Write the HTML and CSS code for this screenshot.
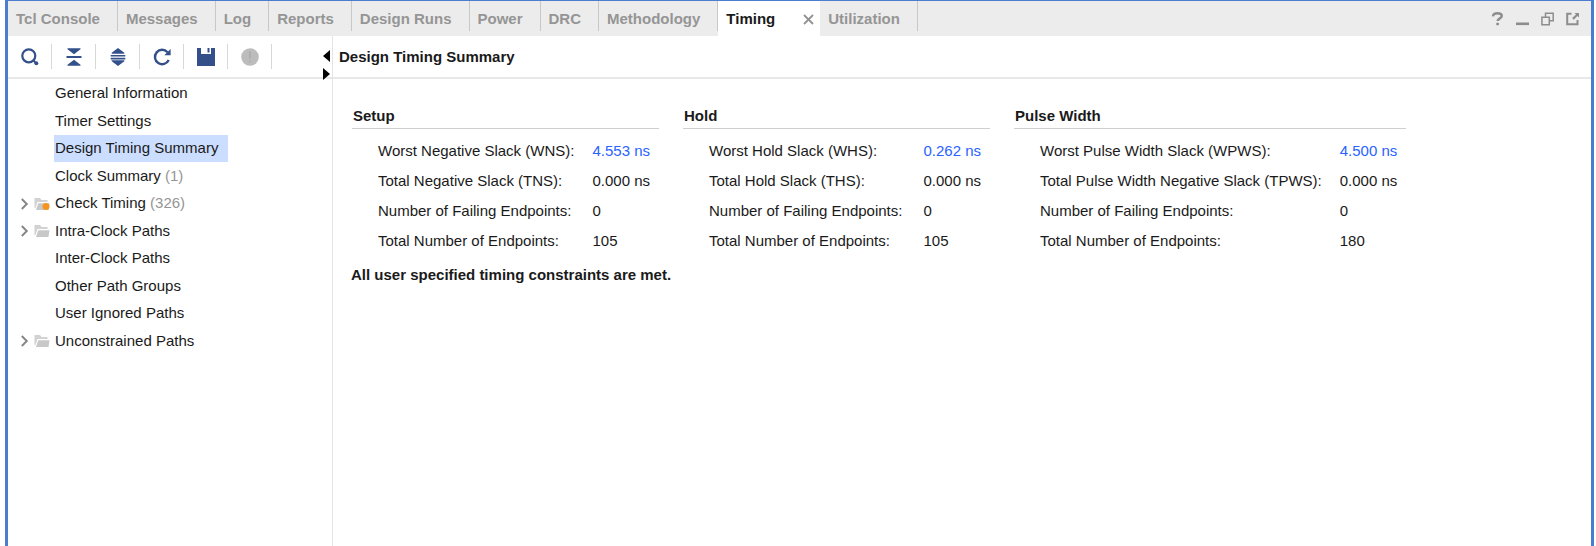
FILE: index.html
```html
<!DOCTYPE html>
<html lang="en">
<head>
<meta charset="utf-8">
<title>Timing</title>
<link rel="stylesheet" href="styles.css">
</head>
<body>
<div class="window">
  <header class="tabbar">
    <nav class="tabs" aria-label="Result windows">
      <div class="tab"><button type="button">Tcl Console</button></div>
      <div class="tab"><button type="button">Messages</button></div>
      <div class="tab"><button type="button">Log</button></div>
      <div class="tab"><button type="button">Reports</button></div>
      <div class="tab"><button type="button">Design Runs</button></div>
      <div class="tab"><button type="button">Power</button></div>
      <div class="tab"><button type="button">DRC</button></div>
      <div class="tab"><button type="button">Methodology</button></div>
      <div class="tab active"><button type="button" aria-current="page">Timing</button><button type="button" class="close" aria-label="Close Timing"><svg width="11" height="11" viewBox="0 0 11 11"><path d="M1 1l9 9M10 1l-9 9" fill="none" stroke="#929292" stroke-width="1.8"/></svg></button></div>
      <div class="tab"><button type="button">Utilization</button></div>
    </nav>
    <div class="controls">
      <button type="button" aria-label="Help"><svg width="13" height="14" viewBox="0 0 13 14"><path d="M2 4.3C2.2 2.4 3.9 1.3 6.4 1.3s4.4 1 4.4 2.8c0 2.3-4.2 2.3-4.2 5" fill="none" stroke="#8d8d8d" stroke-width="2.4"/><path d="M5.3 10.8h2.6v2.4H5.3z" fill="#8d8d8d"/></svg></button>
      <button type="button" aria-label="Minimize"><svg width="13" height="14" viewBox="0 0 13 14"><path d="M0 10.5h13v2.6H0z" fill="#8d8d8d"/></svg></button>
      <button type="button" aria-label="Restore"><svg width="13" height="14" viewBox="0 0 13 14"><path d="M4.5 5V1.2h7.7v7.6H8.5M.9 5.3h7.4v7.4H.9z" fill="none" stroke="#8d8d8d" stroke-width="1.5"/></svg></button>
      <button type="button" aria-label="Float"><svg width="13" height="14" viewBox="0 0 13 14"><path d="M5.5 1.7H1.2v10.6h10.3V8" fill="none" stroke="#8d8d8d" stroke-width="2"/><path d="M8.5 1H13v4.5l-1.600-1.500-3.600 3.800-1.700-1.700L10 2.500z" fill="#8d8d8d"/></svg></button>
    </div>
  </header>
  <div class="body">
    <aside class="side">
      <div class="toolbar">
        <button type="button" aria-label="Search"><svg width="20" height="20" viewBox="0 0 20 20"><circle cx="8.800" cy="8.800" r="6.500" fill="none" stroke="#34508a" stroke-width="2.200"/><path d="M13.200 13.200l2 2" stroke="#34508a" stroke-width="2"/><circle cx="16.300" cy="16.300" r="2" fill="#34508a"/></svg></button>
        <button type="button" aria-label="Collapse all"><svg width="20" height="20" viewBox="0 0 20 20"><path d="M3.500 1.200h13v1L10 7.200 3.500 2.200zM3.500 18.800h13v-1L10 12.800l-6.500 5zM2.500 9h15v1.900h-15z" fill="#34508a"/></svg></button>
        <button type="button" aria-label="Expand all"><svg width="20" height="20" viewBox="0 0 20 20"><path d="M10 1l6.300 4.700v1.100H3.700V5.700zM10 19l6.300-4.700v-1.100H3.700v1.100zM2.700 7.900h14.600v1.700H2.700zM2.700 10.700h14.600v1.700H2.700z" fill="#34508a"/></svg></button>
        <button type="button" aria-label="Refresh"><svg width="20" height="20" viewBox="0 0 20 20"><path d="M15.500 5.200A7.200 7.200 0 1 0 16.700 13" fill="none" stroke="#34508a" stroke-width="2.400"/><path d="M18.600 2v6.300h-6.300z" fill="#34508a"/></svg></button>
        <button type="button" aria-label="Save"><svg width="20" height="20" viewBox="0 0 20 20"><path d="M1 1h4v6h10V1h4v18H1z" fill="#34508a"/><path d="M11.500 1h2v4.500h-2z" fill="#34508a"/></svg></button>
        <button type="button" aria-label="Report issues" disabled><svg width="20" height="20" viewBox="0 0 20 20"><circle cx="10" cy="10" r="8.800" fill="#bcbcbc"/><path d="M9.200 4.500h1.600v7H9.200zM9.200 13.500h1.600v1.800H9.200z" fill="#aaa"/></svg></button>
      </div>
      <ul class="tree">
        <li><span class="twist"></span><a href="#general">General Information</a></li>
        <li><span class="twist"></span><a href="#settings">Timer Settings</a></li>
        <li><span class="twist"></span><a href="#summary" class="selected">Design Timing Summary</a></li>
        <li><span class="twist"></span><a href="#clocks">Clock Summary <span class="count">(1)</span></a></li>
        <li><button type="button" class="twist" aria-label="Expand Check Timing"><svg width="32" height="14" viewBox="0 0 32 14"><path d="M1.800 2l5 5-5 5" fill="none" stroke="#858585" stroke-width="1.900"/><path d="M14.500 1h5.500l1.500 2h6v2h-10l-2 6h-1z" fill="#d2d2d2"/><path d="M18.300 6.200H29.500l-1 6.800H16z" fill="#c8c8c8"/><circle cx="26" cy="9.400" r="3.500" fill="#f7941d"/></svg></button><a href="#check">Check Timing <span class="count">(326)</span></a></li>
        <li><button type="button" class="twist" aria-label="Expand Intra-Clock Paths"><svg width="32" height="14" viewBox="0 0 32 14"><path d="M1.800 2l5 5-5 5" fill="none" stroke="#858585" stroke-width="1.900"/><path d="M14.500 1h5.500l1.500 2h6v2h-10l-2 6h-1z" fill="#d2d2d2"/><path d="M18.300 6.200H29.500l-1 6.800H16z" fill="#c8c8c8"/></svg></button><a href="#intra">Intra-Clock Paths</a></li>
        <li><span class="twist"></span><a href="#inter">Inter-Clock Paths</a></li>
        <li><span class="twist"></span><a href="#other">Other Path Groups</a></li>
        <li><span class="twist"></span><a href="#ignored">User Ignored Paths</a></li>
        <li><button type="button" class="twist" aria-label="Expand Unconstrained Paths"><svg width="32" height="14" viewBox="0 0 32 14"><path d="M1.800 2l5 5-5 5" fill="none" stroke="#858585" stroke-width="1.900"/><path d="M14.500 1h5.500l1.500 2h6v2h-10l-2 6h-1z" fill="#d2d2d2"/><path d="M18.300 6.200H29.500l-1 6.800H16z" fill="#c8c8c8"/></svg></button><a href="#unconstrained">Unconstrained Paths</a></li>
      </ul>
      <div class="splitter">
        <button type="button" aria-label="Collapse side panel"><svg width="7" height="12" viewBox="0 0 7 12"><path d="M7 0v12L0 6z"/></svg></button>
        <button type="button" aria-label="Expand side panel"><svg width="7" height="12" viewBox="0 0 7 12"><path d="M0 0v12l7-6z"/></svg></button>
      </div>
    </aside>
    <main class="main" id="summary">
      <h1 class="title">Design Timing Summary</h1>
      <div class="groups">
        <section class="group">
          <h2>Setup</h2>
          <table>
            <tr><th scope="row">Worst Negative Slack (WNS):</th><td><a href="#wns">4.553 ns</a></td></tr>
            <tr><th scope="row">Total Negative Slack (TNS):</th><td>0.000 ns</td></tr>
            <tr><th scope="row">Number of Failing Endpoints:</th><td>0</td></tr>
            <tr><th scope="row">Total Number of Endpoints:</th><td>105</td></tr>
          </table>
        </section>
        <section class="group">
          <h2>Hold</h2>
          <table>
            <tr><th scope="row">Worst Hold Slack (WHS):</th><td><a href="#whs">0.262 ns</a></td></tr>
            <tr><th scope="row">Total Hold Slack (THS):</th><td>0.000 ns</td></tr>
            <tr><th scope="row">Number of Failing Endpoints:</th><td>0</td></tr>
            <tr><th scope="row">Total Number of Endpoints:</th><td>105</td></tr>
          </table>
        </section>
        <section class="group">
          <h2>Pulse Width</h2>
          <table>
            <tr><th scope="row">Worst Pulse Width Slack (WPWS):</th><td><a href="#wpws">4.500 ns</a></td></tr>
            <tr><th scope="row">Total Pulse Width Negative Slack (TPWS):</th><td>0.000 ns</td></tr>
            <tr><th scope="row">Number of Failing Endpoints:</th><td>0</td></tr>
            <tr><th scope="row">Total Number of Endpoints:</th><td>180</td></tr>
          </table>
        </section>
      </div>
      <p class="verdict">All user specified timing constraints are met.</p>
    </main>
  </div>
</div>
</body>
</html>
```
FILE: styles.css
```css
* {
  box-sizing: border-box;
}

body {
  margin: 0;
  background: #fff;
  color: #1a1a1a;
  font: 15px/18px "Liberation Sans", Arial, sans-serif;
}

button {
  padding: 0;
  border: 0;
  background: none;
  color: inherit;
  font: inherit;
}

svg {
  display: block;
}

a {
  color: inherit;
  text-decoration: none;
}

.window {
  display: flex;
  flex-direction: column;
  min-height: 100vh;
  margin: 0 2px 0 5px;
  border: solid #4a7dcf;
  border-width: 1px 3px 0;
}

.tabbar {
  display: flex;
  justify-content: space-between;
  height: 35px;
  background: #ececec;
  color: #959595;
  font-weight: bold;
}

.tabs {
  display: flex;
}

.tab {
  display: flex;
  align-items: center;
  padding: 0 18px 0 8px;
  background: linear-gradient(#c8c8c8, #c8c8c8) right top / 1px 30px no-repeat;
}

.tab.active {
  padding-right: 6px;
  background: #fff;
  color: #1a1a1a;
}

.close {
  margin-left: 28px;
  padding-top: 2px;
}

.controls {
  display: flex;
  align-items: center;
  gap: 12px;
  padding: 1px 12px 0 0;
}

.body {
  display: flex;
  flex: 1;
}

.side {
  position: relative;
  flex: 0 0 325px;
  border-right: 1px solid #e4e4e4;
}

.toolbar {
  display: flex;
  align-items: center;
  height: 43px;
  border-bottom: 2px solid #e8e8e8;
}

.toolbar button {
  display: flex;
  align-items: center;
  justify-content: center;
  width: 44px;
  height: 25px;
  border-right: 1px solid #d8d8d8;
}

.tree {
  display: grid;
  grid-auto-rows: 1fr;
  height: 275px;
  margin: 1px 0 0;
  padding: 0 0 0 12px;
  list-style: none;
}

.tree li {
  display: flex;
  align-items: center;
}

.tree a {
  padding: 4px 10px 5px 1px;
}

.twist {
  width: 34px;
}

.selected {
  background: #ccdeff;
}

.count {
  color: #959595;
}

.splitter {
  position: absolute;
  top: 14px;
  right: 2px;
  display: grid;
  gap: 6px;
}

.main {
  flex: 1;
}

.title {
  height: 43px;
  margin: 0;
  padding: 12px 6px;
  border-bottom: 2px solid #e8e8e8;
  font-size: 15px;
  line-height: 18px;
}

.groups {
  display: flex;
  gap: 24px;
  padding: 28px 19px 0;
}

.group {
  min-width: 307px;
}

.group h2 {
  margin: 0 0 7px;
  padding: 0 1px 3px;
  border-bottom: 1px solid #cfcfcf;
  font-size: 15px;
  line-height: 18px;
}

.group table {
  width: 100%;
  border-collapse: collapse;
}

.group th,
.group td {
  height: 30px;
  padding: 0 18px 0 26px;
  font-weight: normal;
  text-align: left;
  white-space: nowrap;
}

.group th {
  width: 100%;
}

.group td {
  padding: 0 9px 0 0;
}

.group a {
  color: #2962ff;
}

.verdict {
  margin: 10px 18px;
  font-weight: bold;
}
```
